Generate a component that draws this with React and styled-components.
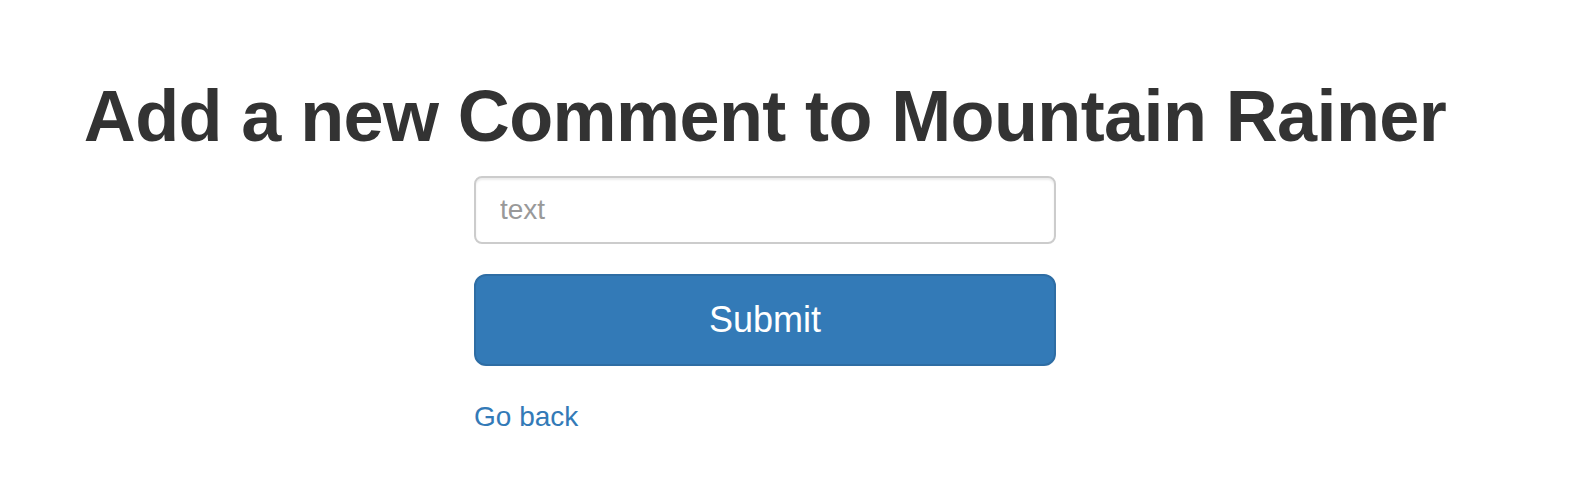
import React from "react";
import styled, { createGlobalStyle } from "styled-components";

const Global = createGlobalStyle`
  html, body { margin: 0; padding: 0; background: #fff; }
  body { font-family: "Liberation Sans", Arial, Helvetica, sans-serif; color: #333; }
  * { box-sizing: border-box; }
`;

const Page = styled.div`
  width: 1530px;
  padding-top: 77px;
`;

const Heading = styled.h1`
  margin: 0 0 20px;
  font-size: 72px;
  line-height: 79px;
  font-weight: 700;
  color: #333;
  text-align: center;
  letter-spacing: -0.6px;
`;

const Form = styled.form`
  width: 582px;
  margin: 0 auto;
  display: flex;
  flex-direction: column;
`;

const Input = styled.input`
  height: 68px;
  width: 100%;
  padding: 0 24px;
  font-family: inherit;
  font-size: 28px;
  color: #555;
  border: 2px solid #ccc;
  border-radius: 8px;
  box-shadow: inset 0 2px 2px rgba(0, 0, 0, 0.075);
  outline: none;
  &::placeholder { color: #999; }
`;

const Button = styled.button`
  margin-top: 30px;
  height: 92px;
  width: 100%;
  font-family: inherit;
  font-size: 36px;
  color: #fff;
  background: #337ab7;
  border: 2px solid #2e6da4;
  border-radius: 12px;
  cursor: pointer;
`;

const Back = styled.a`
  display: block;
  margin-top: 31px;
  font-size: 28px;
  line-height: 40px;
  color: #337ab7;
  text-decoration: none;
`;

export default function App() {
  return (
    <>
      <Global />
      <Page>
        <Heading>Add a new Comment to Mountain Rainer</Heading>
        <Form onSubmit={(e) => e.preventDefault()}>
          <Input type="text" placeholder="text" />
          <Button type="submit">Submit</Button>
          <Back href="#">Go back</Back>
        </Form>
      </Page>
    </>
  );
}
